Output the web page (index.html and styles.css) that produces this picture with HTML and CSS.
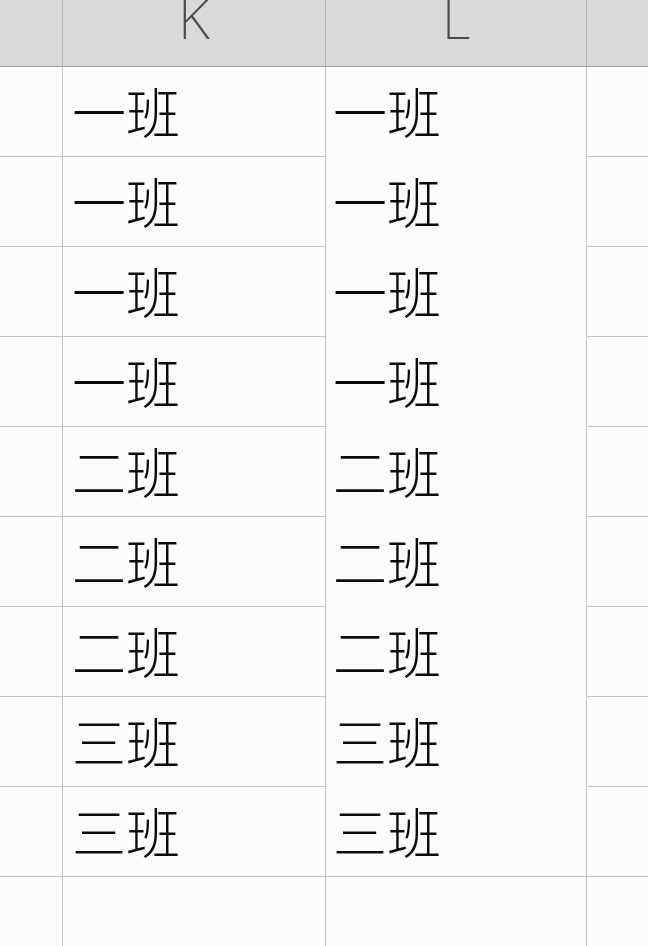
FILE: index.html
```html
<!DOCTYPE html>
<html lang="zh">
<head>
<meta charset="utf-8">
<link rel="stylesheet" href="styles.css">
</head>
<body>
<div class="sheet">
  <div class="hd"></div>
  <div class="hd"><span class="col-letter">K</span></div>
  <div class="hd"><span class="col-letter">L</span></div>
  <div class="hd last"></div>

  <div class="c"></div><div class="c txt">一班</div><div class="c txt l merged">一班</div><div class="c last"></div>
  <div class="c"></div><div class="c txt">一班</div><div class="c txt l merged">一班</div><div class="c last"></div>
  <div class="c"></div><div class="c txt">一班</div><div class="c txt l merged">一班</div><div class="c last"></div>
  <div class="c"></div><div class="c txt">一班</div><div class="c txt l merged">一班</div><div class="c last"></div>
  <div class="c"></div><div class="c txt">二班</div><div class="c txt l merged">二班</div><div class="c last"></div>
  <div class="c"></div><div class="c txt">二班</div><div class="c txt l merged">二班</div><div class="c last"></div>
  <div class="c"></div><div class="c txt">二班</div><div class="c txt l merged">二班</div><div class="c last"></div>
  <div class="c"></div><div class="c txt">三班</div><div class="c txt l merged">三班</div><div class="c last"></div>
  <div class="c"></div><div class="c txt">三班</div><div class="c txt l">三班</div><div class="c last"></div>
  <div class="c"></div><div class="c"></div><div class="c"></div><div class="c last"></div>
</div>
</body>
</html>
```
FILE: styles.css
```css
html, body {
  margin: 0;
  padding: 0;
  background: #fcfcfc;
  overflow: hidden;
}
.sheet {
  display: grid;
  grid-template-columns: 63px 263px 261px 1fr;
  grid-template-rows: 67px repeat(10, 90px);
  width: 648px;
  height: 946px;
  overflow: hidden;
}
.hd {
  background: #d9d9d9;
  border-right: 1px solid #b4b4b4;
  border-bottom: 1px solid #9c9c9c;
  display: flex;
  justify-content: center;
  align-items: flex-end;
  overflow: hidden;
}
.hd.last, .c.last {
  border-right: none;
}
.col-letter {
  font-family: "Noto Sans", "DejaVu Sans", sans-serif;
  font-weight: 200;
  font-size: 56px;
  line-height: 1;
  color: #4a4a4a;
  margin-bottom: 21px;
}
.c {
  border-right: 1px solid #c6c6c6;
  border-bottom: 1px solid #c6c6c6;
  background: #fcfcfc;
}
.c.merged {
  border-bottom-color: #fcfcfc;
}
.txt {
  display: flex;
  align-items: center;
  padding-left: 9px;
  padding-bottom: 2px;
  font-family: "Noto Sans CJK SC", sans-serif;
  font-weight: 300;
  font-size: 54px;
  color: #0a0a0a;
}
.txt.l {
  padding-left: 7px;
}
```
